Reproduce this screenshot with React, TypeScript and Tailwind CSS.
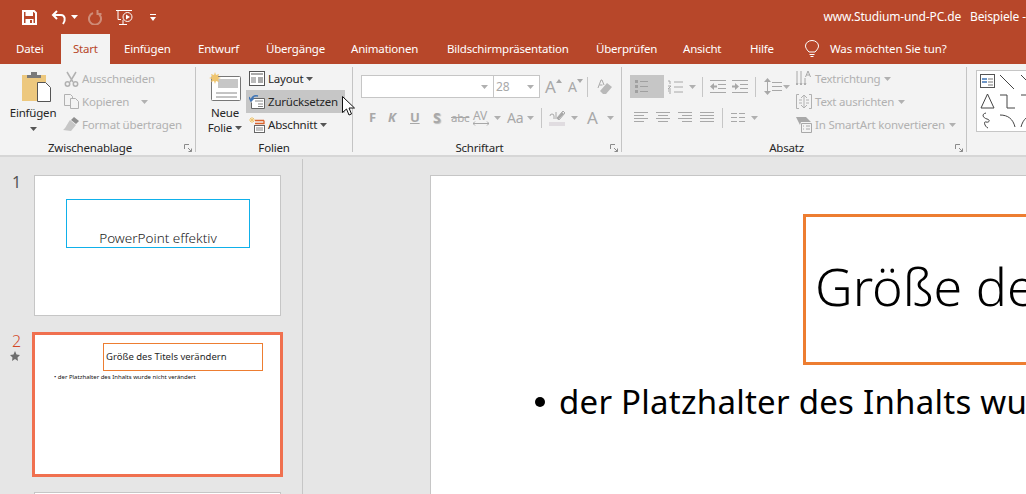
import type { ReactNode } from 'react';

const tabs = [
  { label: 'Datei', w: 'w-[61px] pl-4' },
  { label: 'Start', w: 'w-[49px] pl-3 bg-[#f3f3f3] text-[#b7472a]' },
  { label: 'Einfügen', w: 'w-[74px] pl-3.5' },
  { label: 'Entwurf', w: 'w-[68px] pl-3.5' },
  { label: 'Übergänge', w: 'w-[85px] pl-3.5' },
  { label: 'Animationen', w: 'w-[96px] pl-3.5' },
  { label: 'Bildschirmpräsentation', w: 'w-[149px] pl-3.5' },
  { label: 'Überprüfen', w: 'w-[87px] pl-3.5' },
  { label: 'Ansicht', w: 'w-[67px] pl-3.5' },
  { label: 'Hilfe', w: 'w-[54px] pl-3.5' },
];

function Caret({ className = 'text-[#b0b0b0]' }: { className?: string }) {
  return (
    <svg width="7" height="4" viewBox="0 0 7 4" className={`shrink-0 ${className}`}>
      <path d="M0 0h7L3.5 4z" fill="currentColor" />
    </svg>
  );
}

function SmallRow({ icon, label, caret, dim, active, wideCaret }: { icon: ReactNode; label: string; caret?: boolean; dim?: boolean; active?: boolean; wideCaret?: boolean }) {
  return (
    <div className={`flex h-[23px] shrink-0 items-center gap-[3px] pl-[3px] ${dim ? 'text-[#b1b1b1]' : 'text-[#262626]'} ${active ? 'bg-[#c6c6c6]' : ''}`}>
      <span className="flex w-4 justify-center">{icon}</span>
      <span className="whitespace-nowrap">{label}</span>
      {caret && <span className={wideCaret ? 'ml-[9px]' : ''}><Caret className={dim ? 'text-[#b1b1b1]' : 'text-[#555555]'} /></span>}
    </div>
  );
}

function SmallRowPlain({ icon, label }: { icon: ReactNode; label: string }) {
  return (
    <div className="flex h-[23px] shrink-0 items-center gap-[3px] text-[#b1b1b1]">
      <span className="flex w-4 justify-center">{icon}</span>
      <span className="whitespace-nowrap">{label}</span>
      <span className="ml-px"><Caret className="text-[#b1b1b1]" /></span>
    </div>
  );
}

function Launcher() {
  return (
    <svg width="8" height="8" viewBox="0 0 8 8" className="block text-[#8a8a8a]">
      <path d="M.5 5V.5H5M4 4l3.5 3.5M7.5 4.500v3h-3" fill="none" stroke="currentColor" />
    </svg>
  );
}

function Group({ width, label, launcher = true, children }: { width: string; label: string; launcher?: boolean; children: ReactNode }) {
  return (
    <div className={`relative mt-[3px] flex h-[85px] shrink-0 flex-col border-r border-[#c4c4c4] ${width}`}>
      <div className="flex h-[72px] shrink-0">{children}</div>
      <div className={`mt-[2px] text-center leading-[14px] text-[#262626] ${launcher ? 'pr-[15px]' : ''}`}>{label}</div>
      {launcher && <span className="absolute right-[3px] bottom-0"><Launcher /></span>}
    </div>
  );
}

function Lines({ w = 14 }: { w?: number }) {
  return (
    <svg width={w} height="12" viewBox={`0 0 ${w} 12`} className="block text-[#a8a8a8]">
      <path d={`M0 1.5h6M8 1.5h6M0 5.5h6M8 5.5h6M0 9.5h6M8 9.5h6`} stroke="currentColor" />
    </svg>
  );
}

function Align({ d }: { d: string }) {
  return (
    <svg width="15" height="12" viewBox="0 0 15 12" className="block text-[#a8a8a8]">
      <path d={d} stroke="currentColor" fill="none" />
    </svg>
  );
}

function Save() {
  return (
    <svg width="15" height="15" viewBox="0 0 15 15">
      <path d="M1 1h11l2 2v11H1z" fill="none" stroke="white" strokeWidth="2" />
      <path d="M3.500 1.500h7.500v4.500H3.500zM3.500 9h8v5h-8z" fill="white" />
      <path d="M8 10h2v3H8z" fill="#b7472a" />
    </svg>
  );
}

function Presenter() {
  return (
    <svg width="17" height="17" viewBox="0 0 17 17" fill="none" stroke="white">
      <path d="M0 1.500h16M2 1.500v9h3M3 15.500h8M7 11v4.500" />
      <circle cx="11.500" cy="8" r="4.500" />
      <path d="M10 5.500l4 2.500-4 2.500z" fill="white" stroke="none" />
    </svg>
  );
}

function ShapeGallery() {
  return (
    <div className="ml-[9px] mt-[6px] h-[62px] w-[60px] shrink-0 border border-[#c6c6c6] bg-white">
      <svg width="58" height="60" viewBox="0 0 58 60" fill="none" stroke="#444444">
        <rect x="3.500" y="3.500" width="14" height="13" stroke="#555555" />
        <path d="M5 8h5M5 11h5" stroke="#3f74b5" strokeWidth="1.500" />
        <path d="M11 8h5M11 11h5M11 14h5" stroke="#777777" />
        <path d="M23 4l14 14M44 4l14 14" />
        <path d="M10.500 23l-6.500 14h13zM23 24h7v13h8M44 24h14" />
        <path d="M9 42c-5 1-3 5 1 6s2 4-1 3-1 5 2 6M23 44c8 0 13 4 15 12M58 44c-7 0-12 4-14 12" />
      </svg>
    </div>
  );
}

export default function App() {
  return (
    <div className="relative flex h-[494px] w-[1026px] flex-col overflow-hidden bg-[#e6e6e6] font-['Noto_Sans','Open_Sans',sans-serif] text-[11.5px]">
      {/* title bar */}
      <div className="flex h-[34px] shrink-0 items-center bg-[#b7472a] text-white">
        <div className="ml-[22px] flex items-center">
          <Save />
          <svg width="16" height="15" viewBox="0 0 16 15" className="ml-[14px]" fill="none" stroke="white" strokeWidth="2">
            <path d="M6 1L2 5l4 4M2 5h8c4 0 5 5 2 9" />
          </svg>
          <span className="ml-[4px]"><Caret className="text-white" /></span>
          <svg width="14" height="15" viewBox="0 0 14 15" className="ml-[10px]" fill="none" stroke="#cf8c78" strokeWidth="2">
            <path d="M5 3a6 6 0 1 0 4 0M9.500 0v4h4" />
          </svg>
          <span className="ml-[14px]"><Presenter /></span>
          <svg width="6" height="7" viewBox="0 0 6 7" className="ml-[17px]"><path d="M0 0h6v1H0zM0 3h6L3 7z" fill="white" /></svg>
        </div>
        <div className="ml-auto flex whitespace-nowrap text-[12px] tracking-[-0.15px]">
          <span>www.Studium-und-PC.de</span>
          <span className="ml-[9px] w-[56px]">Beispiele -</span>
        </div>
      </div>

      {/* tabs */}
      <div className="flex h-[30px] shrink-0 bg-[#b7472a] tracking-[-0.2px] text-white">
        {tabs.map(t => (
          <div key={t.label} className={`flex shrink-0 items-center ${t.w}`}>{t.label}</div>
        ))}
        <svg width="14" height="18" viewBox="0 0 14 18" fill="none" stroke="white" className="ml-[15px] mt-[6px]">
          <path d="M4 12C1 9 .5 7 .5 6a6.500 5.500 0 0 1 13 0c0 1-.5 3-3.500 6zM4.500 14.500h5M5.500 16.500h3" />
        </svg>
        <span className="ml-[11px] flex items-center tracking-[-0.1px]">Was möchten Sie tun?</span>
      </div>

      {/* ribbon */}
      <div className="flex h-[93px] shrink-0 overflow-hidden border-b-2 border-[#d6d6d6] bg-[#f3f3f3] tracking-[-0.2px]">
        <Group width="w-[196px]" label="Zwischenablage">
          <div className="flex w-[60px] shrink-0 flex-col items-center pt-[5px] text-[#262626]">
            <svg width="29" height="30" viewBox="0 0 29 30" className="ml-[12px]">
              <path d="M0 3h24v26H0z" fill="#edc87e" />
              <path d="M5 6V3h4V0h6v3h4v3z" fill="#7a7a7a" />
              <path d="M15.500 10.500h8l5 5v14h-13z" fill="white" stroke="#555555" />
            </svg>
            <span className="ml-[6px] mt-[3px] leading-[16px]">Einfügen</span>
            <span className="ml-[6px] mt-[6px]"><Caret className="text-[#555555]" /></span>
          </div>
          <div className="flex flex-col">
            <SmallRow dim label="Ausschneiden" icon={
              <svg width="15" height="16" viewBox="0 0 15 16" fill="none" stroke="#b1b1b1" strokeWidth="1.500">
                <path d="M3 1l6 10M12 1L6 11" /><circle cx="3.500" cy="13" r="2.200" /><circle cx="11.500" cy="13" r="2.200" />
              </svg>} />
            <SmallRow dim caret wideCaret label="Kopieren" icon={
              <svg width="15" height="15" viewBox="0 0 15 15" fill="#f3f3f3" stroke="#b1b1b1">
                <path d="M.5.5h6l2 2v9h-8z" /><path d="M6.500 4.500h5l3 3v7h-8z" />
              </svg>} />
            <SmallRow dim label="Format übertragen" icon={
              <svg width="16" height="15" viewBox="0 0 16 15">
                <path d="M11 0l5 4-3 3-5-4z" fill="#8e8e8e" /><path d="M7 3l6 5-5 6-8-1c2-1 3-4 7-10z" fill="#c6c6c6" />
              </svg>} />
          </div>
        </Group>

        <Group width="w-[157px]" label="Folien" launcher={false}>
          <div className="flex w-[50px] shrink-0 flex-col items-center pl-[8px] pt-[5px] text-[#262626]">
            <svg width="32" height="30" viewBox="0 0 32 30">
              <rect x="2.500" y="4.500" width="29" height="24" rx="1" fill="white" stroke="#777777" />
              <path d="M9 7h20v9H9z" fill="#c6c6c6" />
              <path d="M7 21h21M7 25h21" stroke="#888888" />
              <path d="M6 0l1 3 3-1-1 3 3 1-3 1 1 3-3-1-1 3-1-3-3 1 1-3-3-1 3-1-1-3 3 1z" fill="#efc56f" />
            </svg>
            <span className="mt-[3px] leading-[15px]">Neue</span>
            <span className="flex items-center gap-[3px] leading-[15px]">Folie <Caret className="text-[#555555]" /></span>
          </div>
          <div className="flex w-[99px] shrink-0 flex-col">
            <SmallRow caret label="Layout" icon={
              <svg width="16" height="15" viewBox="0 0 16 15" fill="none" stroke="#555555">
                <rect x=".5" y=".5" width="15" height="14" fill="white" /><path d="M2 3h12" strokeWidth="2" stroke="#aaaaaa" /><path d="M2 6h5v6H2z" fill="#bbbbbb" stroke="none" /><path d="M9 7h5M9 9h5M9 11h5" />
              </svg>} />
            <SmallRow active label="Zurücksetzen" icon={
              <svg width="16" height="15" viewBox="0 0 16 15">
                <path d="M3 4.500h12.500v10h-13v-6" fill="white" stroke="#666666" /><path d="M6 7h8M9 10h5M9 12.500h5" stroke="#888888" />
                <path d="M9 2c-4-1-6 1-7 4M0 3l2 4 3-3" fill="none" stroke="#3f74b5" strokeWidth="1.500" />
              </svg>} />
            <SmallRow caret label="Abschnitt" icon={
              <svg width="16" height="16" viewBox="0 0 16 16" fill="none">
                <path d="M3 0v6M0 3h6M1 1l4 4M5 1L1 5" stroke="#efc56f" /><path d="M6 3.500h9M15 3.500v3H6" stroke="#d9622b" strokeWidth="1.300" />
                <rect x="5.500" y="8.500" width="10" height="7" fill="white" stroke="#666666" /><path d="M7 11h7M7 13h7" stroke="#888888" />
              </svg>} />
          </div>
        </Group>

        <Group width="w-[269px]" label="Schriftart">
          <div className="flex flex-col pl-[8px] pt-[8px]">
            <div className="flex items-center">
              <div className="flex h-[23px] w-[133px] items-center justify-end border border-[#c6c6c6] bg-white pr-[5px]"><Caret /></div>
              <div className="-ml-px flex h-[23px] w-[47px] items-center justify-between border border-[#c6c6c6] bg-white pl-[2px] pr-[5px] text-[12px] text-[#a8a8a8]">28<Caret /></div>
              <span className="ml-[5px] w-[11px] text-[17px] leading-none text-[#a8a8a8]">A</span>
              <svg width="6" height="4" viewBox="0 0 6 4" className="mb-[12px]"><path d="M3 0l3 4H0z" fill="#a8a8a8" /></svg>
              <span className="ml-[6px] w-[9px] text-[14px] leading-none text-[#a8a8a8]">A</span>
              <svg width="6" height="4" viewBox="0 0 6 4" className="mb-[12px]"><path d="M0 0h6L3 4z" fill="#a8a8a8" /></svg>
              <span className="ml-[4px] h-[20px] w-px bg-[#c6c6c6]" />
              <svg width="16" height="16" viewBox="0 0 16 16" className="ml-[9px]">
                <path d="M10 4l5 4-6 7H6l-3-3z" fill="#b9b9b9" /><path d="M1 9l3-8h1l2 5M2.500 6h3" fill="none" stroke="#a8a8a8" />
              </svg>
            </div>
            <div className="mt-[8px] flex h-[23px] items-center pl-[8px] leading-none text-[#a8a8a8]">
              <span className="w-[19px] text-[13px] font-bold">F</span>
              <span className="w-[22px] text-[13px] font-bold italic">K</span>
              <span className="w-[23px] text-[13px] font-bold underline">U</span>
              <span className="w-[18px] text-[14px] font-bold [text-shadow:1px_1px_1px_#bbbbbb]">S</span>
              <span className="w-[22px] text-[11.500px] line-through">abc</span>
              <span className="flex w-[21px] flex-col text-[12px] leading-[11px]">AV
                <svg width="16" height="5" viewBox="0 0 16 5" fill="none" stroke="#a8a8a8"><path d="M0 2.500h16M2 .5l-2 2 2 2M14 .5l2 2-2 2" /></svg>
              </span>
              <Caret />
              <span className="ml-[6px] w-[20px] text-[14px]">Aa</span>
              <Caret />
              <span className="ml-[7px] h-[20px] w-px bg-[#c6c6c6]" />
              <svg width="16" height="16" viewBox="0 0 16 16" className="ml-[7px]">
                <path d="M1 6a2 2 0 1 1 4 0v3M7 2v7M8 8l6-7 2 2-6 7z" fill="none" stroke="#a8a8a8" /><path d="M8 8l5-6 2 2-6 6z" fill="#a8a8a8" /><path d="M0 12h16v4H0z" fill="#e0dce0" />
              </svg>
              <span className="ml-[6px]"><Caret /></span>
              <span className="ml-[9px] w-[13px] text-[17px]">A</span>
              <span className="ml-[7px]"><Caret /></span>
            </div>
          </div>
        </Group>

        <Group width="w-[345px]" label="Absatz">
          <div className="flex w-[174px] shrink-0 flex-col pl-[8px] pt-[8px]">
            <div className="flex h-[23px] items-center">
              <div className="flex h-[23px] w-[34px] items-center justify-start bg-[#c6c6c6] pl-[5px]">
                <svg width="15" height="13" viewBox="0 0 15 13" className="text-[#a0a0a0]">
                  <path d="M0 0h3v3H0zM0 5h3v3H0zM0 10h3v3H0z" fill="currentColor" /><path d="M5 1.500h8M5 6.500h8M5 11.500h8" stroke="currentColor" />
                </svg>
              </div>
              <svg width="15" height="14" viewBox="0 0 15 14" className="ml-[4px] text-[#a8a8a8]" fill="none" stroke="currentColor">
                <path d="M6 2h9M6 7h9M6 12h9M0 1h2v3M0 6h3L0 9h3M0 11h3M1 13h2" />
              </svg>
              <span className="ml-[6px]"><Caret /></span>
              <span className="ml-[6px] h-[20px] w-px bg-[#c6c6c6]" />
              <svg width="16" height="13" viewBox="0 0 16 13" className="ml-[7px] text-[#a8a8a8]" fill="none" stroke="currentColor">
                <path d="M0 .5h16M8 4.500h8M8 8.500h8M0 12.500h16" /><path d="M0 6.500L4 3v2.500h3v2H4V10z" fill="currentColor" stroke="none" />
              </svg>
              <svg width="16" height="13" viewBox="0 0 16 13" className="ml-[6px] text-[#a8a8a8]" fill="none" stroke="currentColor">
                <path d="M0 .5h16M8 4.500h8M8 8.500h8M0 12.500h16" /><path d="M7 6.500L3 3v2.500H0v2h3V10z" fill="currentColor" stroke="none" />
              </svg>
              <span className="ml-[7px] h-[20px] w-px bg-[#c6c6c6]" />
              <svg width="18" height="17" viewBox="0 0 18 17" className="ml-[8px] text-[#a8a8a8]" fill="none" stroke="currentColor">
                <path d="M8 4.500h10M8 8.500h10M8 12.500h10M3.500 2v13" /><path d="M3.500 0L7 4H0zM3.500 17L0 13h7z" fill="currentColor" stroke="none" />
              </svg>
              <span className="ml-px"><Caret /></span>
            </div>
            <div className="mt-[8px] flex h-[23px] items-center">
              <span className="ml-[4px]"><Align d="M0 .5h14M0 3.500h10M0 6.500h14M0 9.500h10" /></span>
              <span className="ml-[7px]"><Align d="M0 .5h14M2 3.500h10M0 6.500h14M2 9.500h10" /></span>
              <span className="ml-[7px]"><Align d="M0 .5h14M4 3.500h10M0 6.500h14M4 9.500h10" /></span>
              <span className="ml-[7px]"><Align d="M0 .5h14M0 3.500h14M0 6.500h14M0 9.500h14" /></span>
              <span className="ml-[7px] h-[20px] w-px bg-[#c6c6c6]" />
              <span className="ml-[8px]"><Lines /></span>
              <span className="ml-[6px]"><Caret /></span>
            </div>
          </div>
          <div className="flex flex-col">
            <SmallRowPlain label="Textrichtung" icon={
              <svg width="16" height="17" viewBox="0 0 16 17" fill="none" stroke="#a8a8a8">
                <path d="M1 1v14M5 1v14M9 8v7M0 13l1 2 1-2M4 13l1 2 1-2M8 13l1 2 1-2" />
                <path d="M9.500 7l2.500-6 2.500 6M10.500 5h3" />
              </svg>} />
            <SmallRowPlain label="Text ausrichten" icon={
              <svg width="16" height="15" viewBox="0 0 16 15" fill="none" stroke="#b1b1b1">
                <path d="M3 .5H.5v14H3M13 .5h2.500v14H13" /><path d="M8 2v11M5 4l3-3 3 3M5 11l3 3 3-3M3 6h3M10 6h3M3 9h3M10 9h3" />
              </svg>} />
            <SmallRowPlain label="In SmartArt konvertieren" icon={
              <svg width="16" height="16" viewBox="0 0 16 16" fill="none">
                <path d="M0 0h10l5 5H5l-1 3z" fill="#a8a8a8" /><path d="M5.500 6.500h10v9h-10z" fill="#f3f3f3" stroke="#a8a8a8" /><path d="M7 9h1M10 9h4M7 12h1M10 12h4" stroke="#a8a8a8" />
              </svg>} />
          </div>
        </Group>

        <ShapeGallery />
      </div>

      {/* slide panes */}
      <div className="flex min-h-0 flex-1">
        <div className="mt-[2px] flex h-full w-[303px] shrink-0 flex-col items-start border-r border-[#c6c6c6]">
          <div className="ml-[12px] mt-[16px] flex">
            <span className="-mt-[3px] w-[22px] text-[16px] leading-[20px] text-[#555555]">1</span>
            <div className="relative h-[141px] w-[247px] border border-[#c6c6c6] bg-white">
              <div className="absolute left-[31px] top-[23px] flex h-[49px] w-[184px] items-end justify-center border border-[#0fb0ea] pb-[1px] text-[13.500px] font-light leading-[16px] text-[#1a1a1a]">PowerPoint effektiv</div>
            </div>
          </div>
          <div className="ml-[12px] mt-[16px] flex">
            <div className="flex w-[20px] flex-col text-[16px] font-light leading-[19px] text-[#d24726]">
              2
              <svg width="10" height="10" viewBox="0 0 10 10" className="-ml-[2px]"><path d="M5 0l1.500 3.500L10 4 7.500 6.500 8 10 5 8 2 10l.5-3.500L0 4l3.500-.5z" fill="#6e6e6e" /></svg>
            </div>
            <div className="relative h-[145px] w-[251px] border-[3px] border-[#f0704f] bg-white">
              <div className="absolute left-[68px] top-[8px] flex h-[28px] w-[160px] items-center border border-[#ed7d31] pl-[2px] text-[9.500px] text-[#262626]">Größe des Titels verändern</div>
              <div className="absolute left-[19px] top-[38px] whitespace-nowrap text-[6px] leading-[8px] text-[#111111]">• der Platzhalter des Inhalts wurde nicht verändert</div>
            </div>
          </div>
          <div className="ml-[34px] mt-[15px] h-[20px] w-[247px] border border-[#c6c6c6] bg-white" />
        </div>

        <div className="min-w-0 flex-1 overflow-hidden pl-[127px] pt-[18px]">
          <div className="relative h-[340px] w-[700px] overflow-hidden border border-[#c6c6c6] bg-white">
            <div className="absolute left-[372px] top-[38px] flex h-[151px] w-[400px] items-start whitespace-nowrap border-[3px] border-[#ed7d31] pl-[9px] pt-[36px] text-[52px] font-light leading-[65px] text-black">Größe des Titels</div>
            <div className="absolute left-[104px] top-[205px] flex items-center whitespace-nowrap text-[33px] leading-[42px] tracking-[0.25px] text-black">
              <span className="mr-[14px] h-[10px] w-[10px] rounded-full bg-black" />der Platzhalter des Inhalts wurde nicht verändert
            </div>
          </div>
        </div>
      </div>

      {/* mouse cursor */}
      <svg width="15" height="21" viewBox="0 0 15 21" className="absolute left-[342px] top-[96px]">
        <path d="M.5.500v16l4-3.500 2.500 6 2.500-1-2.500-6h5.500z" fill="white" stroke="#111111" />
      </svg>
    </div>
  );
}
